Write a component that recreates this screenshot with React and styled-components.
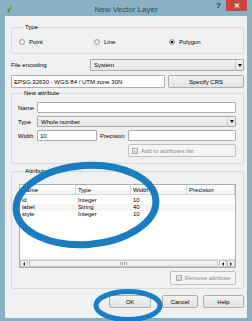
import React from 'react';
import styled, { createGlobalStyle } from 'styled-components';

const Global = createGlobalStyle`
  html, body { margin: 0; padding: 0; }
  body { width: 252px; height: 321px; overflow: hidden; font-family: "Liberation Sans", Arial, sans-serif; }
  * { box-sizing: border-box; }
`;

const Frame = styled.div`
  position: relative;
  width: 252px;
  height: 321px;
  background: #88b0c3;
  display: flex;
  flex-direction: column;
  padding: 0 5px 3px 5px;
`;

const TitleBar = styled.div`
  height: 16px;
  display: grid;
  grid-template-columns: 1fr auto 1fr;
  align-items: center;
`;

const TitleIcon = styled.svg`
  width: 5px;
  height: 7px;
  margin-left: 2px;
  margin-top: 2px;
`;

const Title = styled.div`
  font-size: 8px;
  color: #2f4b5c;
  padding-top: 2px;
`;

const TitleButtons = styled.div`
  justify-self: end;
  align-self: start;
  display: flex;
  align-items: flex-start;
`;

const HelpGlyph = styled.div`
  font-size: 8px;
  font-weight: bold;
  color: #2a3a46;
  width: 10px;
  height: 11px;
  line-height: 12px;
`;

const CloseButton = styled.div`
  width: 21px;
  height: 11px;
  background: #c9463d;
  color: #fff;
  font-size: 7px;
  font-weight: bold;
  display: flex;
  align-items: center;
  justify-content: center;
`;

const Body = styled.div`
  flex: 1;
  background: #f0f0f0;
  padding: 8px 3px 5px 6px;
  display: flex;
  flex-direction: column;
  font-size: 6px;
  color: #000;
`;

const Group = styled.fieldset`
  margin: ${p => p.$mt || 0}px 0 0 0;
  padding: ${p => p.$pad};
  border: 1px solid #d3dbe0;
  border-radius: 2px;
  min-width: 0;
`;

const Legend = styled.legend`
  font-size: 6px;
  line-height: 7px;
  padding: 0 1px;
  margin-left: 5px;
`;

const RadioRow = styled.div`
  display: grid;
  grid-template-columns: 75px 75px 75px;
  height: 8px;
  align-items: center;
`;

const RadioItem = styled.div`
  display: flex;
  align-items: center;
  gap: 4px;
`;

const RadioCircle = styled.span`
  width: 6px;
  height: 6px;
  border-radius: 50%;
  border: 1px solid #9a9a9a;
  background: ${p => (p.$on ? 'radial-gradient(circle, #111 0 1.4px, #d8d8d8 1.6px)' : 'linear-gradient(#e6e6e6, #fafafa)')};
`;

const FormRow = styled.div`
  margin-top: ${p => p.$mt}px;
  display: grid;
  grid-template-columns: ${p => p.$cols};
  column-gap: ${p => p.$gap || 0}px;
  height: ${p => p.$h}px;
  align-items: center;
`;

const Field = styled.div`
  height: ${p => p.$h || 11}px;
  background: ${p => (p.$disabled ? '#f0f0f0' : '#fff')};
  border: 1px solid ${p => (p.$disabled ? '#b8b8b8' : '#abadb3')};
  border-radius: 1px;
  padding-left: 2px;
  display: flex;
  align-items: center;
  white-space: nowrap;
  overflow: hidden;
  grid-column: ${p => p.$span || 'auto'};
`;

const Combo = styled.div`
  height: ${p => p.$h || 11}px;
  border: 1px solid #acacac;
  border-radius: 1px;
  background: linear-gradient(#f2f2f2, #e5e5e5);
  display: flex;
  align-items: center;
  padding-left: 3px;
  grid-column: ${p => p.$span || 'auto'};
`;

const ComboText = styled.span`
  flex: 1;
`;

const ComboArrow = styled.span`
  width: 8px;
  height: 100%;
  border-left: 1px solid #d0d0d0;
  display: flex;
  align-items: center;
  justify-content: center;
  &::after {
    content: '';
    border-left: 2px solid transparent;
    border-right: 2px solid transparent;
    border-top: 3px solid #111;
  }
`;

const Button = styled.div`
  height: ${p => p.$h || 13}px;
  border: 1px solid ${p => (p.$disabled ? '#bfbfbf' : '#acacac')};
  border-radius: 2px;
  background: ${p => (p.$disabled ? '#f4f4f4' : 'linear-gradient(#f2f2f2, #e3e3e3)')};
  color: ${p => (p.$disabled ? '#8a8a8a' : '#000')};
  display: flex;
  align-items: center;
  justify-content: ${p => p.$left ? 'flex-start' : 'center'};
  gap: 3px;
  padding-left: ${p => p.$left ? 3 : 0}px;
  width: ${p => (p.$w ? p.$w + 'px' : 'auto')};
  margin-right: ${p => p.$mr || 0}px;
  grid-column: ${p => p.$span || 'auto'};
  justify-self: ${p => p.$justify || 'stretch'};
`;

const ButtonIcon = styled.span`
  width: 6px;
  height: 6px;
  border: 1px solid #b0b0b0;
  background: linear-gradient(#e8e8e8, #cfcfcf);
`;

const Table = styled.div`
  height: 84px;
  background: #fff;
  border: 1px solid #abadb3;
  display: flex;
  flex-direction: column;
`;

const HeaderRow = styled.div`
  display: grid;
  grid-template-columns: 56px 55px 56px 1fr;
  height: 10px;
  background: linear-gradient(#ffffff, #f1f2f4);
  border-bottom: 1px solid #d5d5d5;
`;

const HeaderCell = styled.div`
  padding-left: 2px;
  display: flex;
  align-items: center;
  border-right: 1px solid #d5d5d5;
`;

const Rows = styled.div`
  flex: 1;
  padding-top: 2px;
`;

const DataRow = styled.div`
  display: grid;
  grid-template-columns: 56px 55px 56px 1fr;
  height: 7px;
  line-height: 7px;
  background: ${p => (p.$alt ? '#f5f5f5' : '#fff')};
`;

const DataCell = styled.div`
  padding-left: 2px;
`;

const ScrollBar = styled.div`
  height: 8px;
  display: flex;
  background: #f0f0f0;
  border-top: 1px solid #e4e4e4;
`;

const ScrollBtn = styled.div`
  width: 8px;
  height: 100%;
  border: 1px solid #c6c6c6;
  background: #f2f2f2;
  display: flex;
  align-items: center;
  justify-content: center;
  &::after {
    content: '';
    border-top: 2px solid transparent;
    border-bottom: 2px solid transparent;
    ${p => (p.$dir === 'left' ? 'border-right: 2px solid #222;' : 'border-left: 2px solid #222;')}
  }
`;

const Thumb = styled.div`
  flex: 1;
  margin: 0 1px;
  border: 1px solid #c6c6c6;
  background: linear-gradient(#f7f7f7, #e8e8e8);
  display: flex;
  align-items: center;
  justify-content: center;
  &::after {
    content: '';
    width: 8px;
    height: 3px;
    background: repeating-linear-gradient(90deg, #a8a8a8 0 1px, transparent 1px 2px);
  }
`;

const BottomRow = styled.div`
  margin-top: 6px;
  display: flex;
  justify-content: flex-end;
  gap: 5px;
`;

const Overlay = styled.svg`
  position: absolute;
  left: 0;
  top: 0;
  width: 252px;
  height: 321px;
  pointer-events: none;
`;

export default function App() {
  return (
    <>
      <Global />
      <Frame>
        <TitleBar>
          <TitleIcon viewBox="0 0 5 7">
            <path d="M1 6 L4 1" stroke="#6aa82a" strokeWidth="1.6" strokeLinecap="round" />
            <path d="M1.5 6 L1 3" stroke="#3d7a12" strokeWidth="1" />
          </TitleIcon>
          <Title>New Vector Layer</Title>
          <TitleButtons>
            <HelpGlyph>?</HelpGlyph>
            <CloseButton>✕</CloseButton>
          </TitleButtons>
        </TitleBar>
        <Body>
          <Group $pad="7px 6px 7px 7px">
            <Legend>Type</Legend>
            <RadioRow>
              <RadioItem><RadioCircle />Point</RadioItem>
              <RadioItem><RadioCircle />Line</RadioItem>
              <RadioItem><RadioCircle $on />Polygon</RadioItem>
            </RadioRow>
          </Group>

          <FormRow $mt={5} $h={12} $cols="79px 1fr">
            <span>File encoding</span>
            <Combo $h={12}><ComboText>System</ComboText><ComboArrow /></Combo>
          </FormRow>

          <FormRow $mt={4} $h={13} $cols="1fr 76px" $gap={3}>
            <Field $h={13}>EPSG:32630 - WGS 84 / UTM zone 30N</Field>
            <Button>Specify CRS</Button>
          </FormRow>

          <Group $mt={2} $pad="5px 7px 6px 6px">
            <Legend>New attribute</Legend>
            <FormRow $mt={0} $h={11} $cols="19px 60px 31px 1fr">
              <span>Name</span>
              <Field $span="2 / 5" />
            </FormRow>
            <FormRow $mt={3} $h={11} $cols="19px 60px 31px 1fr">
              <span>Type</span>
              <Combo $span="2 / 5"><ComboText>Whole number</ComboText><ComboArrow /></Combo>
            </FormRow>
            <FormRow $mt={3} $h={11} $cols="19px 60px 31px 1fr">
              <span>Width</span>
              <Field>10</Field>
              <span style={{ paddingLeft: 3 }}>Precision</span>
              <Field />
            </FormRow>
            <FormRow $mt={3} $h={13} $cols="19px 60px 31px 1fr">
              <Button $disabled $left $span="4 / 5"><ButtonIcon />Add to attributes list</Button>
            </FormRow>
          </Group>

          <Group $mt={4} $pad="9px 7px 3px 7px">
            <Legend>Attributes list</Legend>
            <Table>
              <HeaderRow>
                <HeaderCell>Name</HeaderCell>
                <HeaderCell>Type</HeaderCell>
                <HeaderCell>Width</HeaderCell>
                <HeaderCell>Precision</HeaderCell>
              </HeaderRow>
              <Rows>
                <DataRow><DataCell>id</DataCell><DataCell>Integer</DataCell><DataCell>10</DataCell><DataCell /></DataRow>
                <DataRow $alt><DataCell>label</DataCell><DataCell>String</DataCell><DataCell>40</DataCell><DataCell /></DataRow>
                <DataRow><DataCell>style</DataCell><DataCell>Integer</DataCell><DataCell>10</DataCell><DataCell /></DataRow>
              </Rows>
              <ScrollBar>
                <ScrollBtn $dir="left" />
                <Thumb />
                <ScrollBtn $dir="left" />
                <ScrollBtn $dir="right" />
              </ScrollBar>
            </Table>
            <FormRow $mt={3} $h={14} $cols="1fr">
              <Button $disabled $h={14} $w={66} $justify="end"><ButtonIcon />Remove attribute</Button>
            </FormRow>
          </Group>

          <BottomRow>
            <Button $w={42} $mr={6}>OK</Button>
            <Button $w={36}>Cancel</Button>
            <Button $w={41}>Help</Button>
          </BottomRow>
        </Body>
        <Overlay viewBox="0 0 252 321">
          <ellipse cx="86" cy="205" rx="70" ry="39.5" fill="none" stroke="#1a7cc1" strokeWidth="7" transform="rotate(-4 86 205)" />
          <ellipse cx="128" cy="305.5" rx="32" ry="14" fill="none" stroke="#1a7cc1" strokeWidth="5" />
        </Overlay>
      </Frame>
    </>
  );
}
